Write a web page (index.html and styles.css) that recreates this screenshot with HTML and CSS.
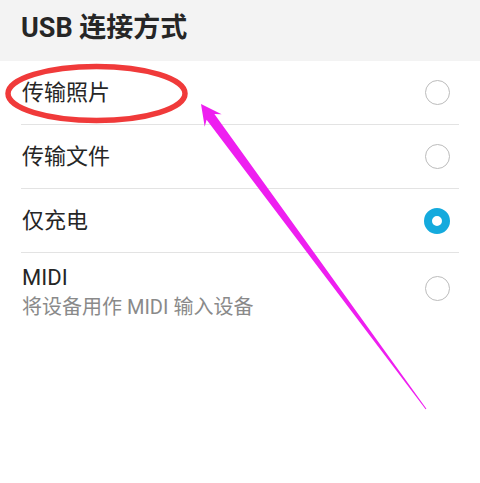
FILE: index.html
```html
<!DOCTYPE html>
<html lang="zh-CN">
<head>
<meta charset="utf-8">
<title>USB 连接方式</title>
<link rel="stylesheet" href="styles.css">
</head>
<body>
<div class="page">
  <header class="header">
    <h1 class="title">USB 连接方式</h1>
  </header>
  <ul class="list">
    <li class="row">
      <span class="label">传输照片</span>
      <span class="radio"></span>
    </li>
    <li class="row">
      <span class="label">传输文件</span>
      <span class="radio"></span>
    </li>
    <li class="row">
      <span class="label">仅充电</span>
      <span class="radio checked"></span>
    </li>
    <li class="row row-tall">
      <div class="text">
        <span class="label label-latin">MIDI</span>
        <span class="sub">将设备用作 MIDI 输入设备</span>
      </div>
      <span class="radio"></span>
    </li>
  </ul>
  <svg class="overlay" width="480" height="483" viewBox="0 0 480 483">
    <ellipse cx="96.5" cy="93.5" rx="88.5" ry="27" fill="none" stroke="#f03a3a" stroke-width="5.5"/>
    <polygon fill="#ee1ff0" points="201,104 221.6,114.3 214.4,114 426.4,408.7 425.6,409.3 206.6,119.7 204.7,126.7"/>
  </svg>
</div>
</body>
</html>
```

FILE: styles.css
```css
html, body {
  margin: 0;
  padding: 0;
  background: #ffffff;
}

.page {
  position: relative;
  width: 480px;
  height: 483px;
  overflow: hidden;
  font-family: "Roboto", "Noto Sans CJK SC", sans-serif;
}

.header {
  height: 61px;
  background: #f3f3f3;
  display: flex;
  align-items: center;
  padding-left: 21px;
}

.title {
  margin: 0;
  font-size: 27px;
  font-weight: 700;
  color: #262626;
  line-height: 1;
  margin-top: -4px;
}

.list {
  list-style: none;
  margin: 0 21px;
  padding: 0;
}

.row {
  height: 63px;
  border-bottom: 1px solid #e3e3e3;
  display: flex;
  align-items: center;
  justify-content: space-between;
  padding-left: 1px;
}

.row-tall {
  height: 70px;
  border-bottom: none;
}

.label {
  font-size: 22px;
  color: #262626;
  line-height: 26px;
}

.label-latin {
  font-size: 22px;
}

.text {
  display: flex;
  flex-direction: column;
  gap: 3px;
  margin-top: 8px;
}

.sub {
  font-size: 20px;
  color: #8a8a8a;
  line-height: 26px;
}

.radio {
  width: 23px;
  height: 23px;
  border: 1.5px solid #bcbcbc;
  border-radius: 50%;
  margin-right: 9px;
  flex: none;
}

.radio.checked {
  width: 10px;
  height: 10px;
  border: 8px solid #14aadd;
}

.overlay {
  position: absolute;
  left: 0;
  top: 0;
  pointer-events: none;
}
```
